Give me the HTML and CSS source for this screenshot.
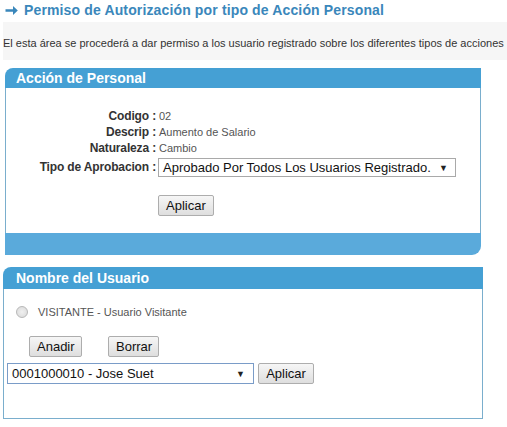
FILE: index.html
```html
<!DOCTYPE html>
<html lang="es">
<head>
<meta charset="utf-8">
<link rel="stylesheet" href="styles.css">
</head>
<body>
<div class="page">
  <h1 class="title"><svg class="arrow" width="13" height="11" viewBox="0 0 13 11"><path d="M0.5 4.2H8V1L12.8 5.5L8 10V6.8H0.5Z" fill="#3a87bb"/></svg><span>Permiso de Autorización por tipo de Acción Personal</span></h1>
  <div class="intro">El esta área se procederá a dar permiso a los usuario registrado sobre los diferentes tipos de acciones</div>

  <div class="panel p1">
    <div class="panel-head">Acción de Personal</div>
    <div class="panel-body body1">
      <div class="grid">
        <div class="lbl">Codigo :</div><div class="val">02</div>
        <div class="lbl">Descrip :</div><div class="val">Aumento de Salario</div>
        <div class="lbl">Naturaleza :</div><div class="val">Cambio</div>
        <div class="lbl">Tipo de Aprobacion :</div>
        <div class="sel sel1"><span>Aprobado Por Todos Los Usuarios Registrado.</span><span class="caret">&#9660;</span></div>
      </div>
      <div class="btnrow1"><button class="btn">Aplicar</button></div>
    </div>
    <div class="panel-foot"></div>
  </div>

  <div class="panel p2">
    <div class="panel-head">Nombre del Usuario</div>
    <div class="panel-body body2">
      <div class="radio-row"><span class="radio"></span><span class="rlabel">VISITANTE - Usuario Visitante</span></div>
      <div class="btnrow2"><button class="btn b-anadir">Anadir</button><button class="btn b-borrar">Borrar</button></div>
      <div class="selrow"><div class="sel sel2"><span>0001000010 - Jose Suet</span><span class="caret">&#9660;</span></div><button class="btn b-apl2">Aplicar</button></div>
    </div>
  </div>
</div>
</body>
</html>
```
FILE: styles.css
```css
* { box-sizing: border-box; }
body { margin: 0; background: #fff; font-family: "Liberation Sans", Arial, sans-serif; color: #333; }
.page { width: 507px; }
.title {
  margin: 0; padding: 2px 0 0 5px; height: 22px;
  font-size: 14px; font-weight: bold; color: #3a87bb; line-height: 16px;
  display: flex; align-items: flex-start; gap: 6px; letter-spacing: 0.14px;
}
.arrow { margin-top: 3px; flex: none; }
.intro {
  margin-left: 3px; height: 38px; background: #f6f6f6;
  font-size: 11px; color: #333; padding-top: 15px; white-space: nowrap; overflow: hidden;
}
.panel { margin-left: 5px; }
.p1 { width: 476px; margin-top: 8px; }
.p2 { width: 480px; margin-left: 3px; margin-top: 12px; }
.panel-head {
  height: 20px; background: #45a0d4; color: #fff; font-weight: bold; font-size: 14px;
  padding-left: 11px; line-height: 20px; border-top-left-radius: 8px;
}
.p2 .panel-head { height: 22px; line-height: 22px; padding-left: 13px; }
.panel-body { border-left: 1px solid #7aaecd; border-right: 1px solid #7aaecd; background: #fff; }
.body1 { height: 145px; padding-top: 21px; }
.grid { display: grid; grid-template-columns: 152px auto; row-gap: 2px; align-items: center; }
.lbl { text-align: right; font-size: 12px; color: #333; padding-right: 2px; height: 14px; line-height: 14px; font-weight: 600; letter-spacing: -0.15px; }
.val { font-size: 11px; color: #555; height: 14px; line-height: 14px; padding-left: 1px; }
.sel {
  border: 1px solid #a9a9a9; background: #fff; height: 20px; font-size: 13px; color: #111;
  display: flex; justify-content: space-between; align-items: center; padding: 0 4px 0 4px;
}
.sel1 { width: 298px; height: 19px; margin-top: 1px; padding-right: 7px; }
.caret { font-size: 9px; color: #222; }
.btnrow1 { padding-left: 152px; margin-top: 18px; }
.btn {
  font-family: "Liberation Sans", Arial, sans-serif; font-size: 13px; color: #111;
  height: 21px; padding: 0 7px; border: 1px solid #adadad; border-radius: 2px;
  background: linear-gradient(#f6f6f6, #dedede);
}
.panel-foot { height: 22px; background: #5aaadb; border-bottom-right-radius: 9px; }
.body2 { height: 130px; border-bottom: 1px solid #7aaecd; padding-top: 16px; }
.radio-row { display: flex; align-items: center; padding-left: 12px; height: 14px; }
.radio { width: 12px; height: 12px; border-radius: 50%; border: 1px solid #b8b8b8; background: radial-gradient(#f0f0f0, #d8d8d8); }
.rlabel { font-size: 11px; color: #555; margin-left: 10px; }
.btnrow2 { margin-top: 17px; padding-left: 25px; display: flex; gap: 26px; }
.b-anadir { width: 53px; }
.b-borrar { width: 51px; }
.selrow { display: flex; gap: 4px; margin-top: 6px; padding-left: 3px; }
.sel2 { width: 247px; height: 21px; border-color: #7a9cc8; font-size: 13px; padding-right: 8px; }
.b-apl2 { width: 56px; }
```
